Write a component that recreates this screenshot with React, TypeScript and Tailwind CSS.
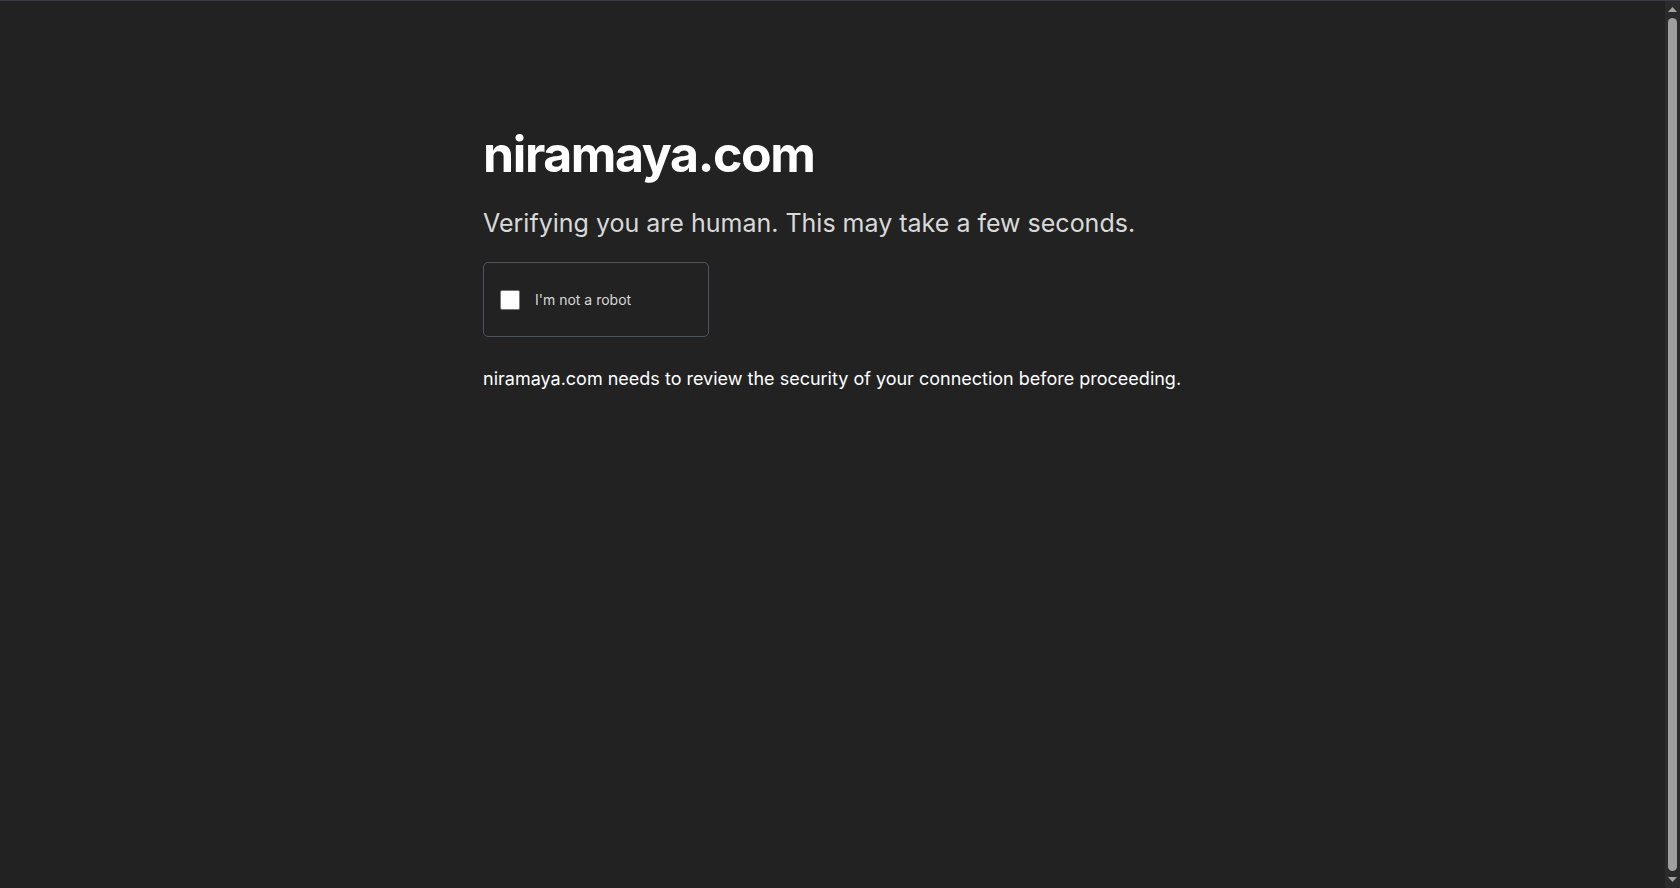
import React from "react";

export default function App() {
  return (
    <div
      className="h-[888px] w-full bg-[#222222] flex overflow-hidden border-t border-[#3b3b42]"
      style={{ fontFamily: "Inter, 'Noto Sans', sans-serif" }}
    >
      <main className="flex-1 min-w-0">
        <div className="mx-auto w-[699px] pt-[123px]">
          <h1 className="text-[50px] leading-[60px] font-bold text-white whitespace-nowrap tracking-[-0.028em]">
            niramaya.com
          </h1>
          <p className="mt-[21px] text-[25px] leading-[36px] text-[#d9d9d9] whitespace-nowrap">
            Verifying you are human. This may take a few seconds.
          </p>
          <div className="mt-[21px] w-[226px] h-[75px] border border-[#4f555e] rounded-[5px] flex items-center pl-[16px]">
            <div className="w-[20px] h-[20px] bg-white border border-[#777777] rounded-[2px]" />
            <span className="ml-[15px] text-[14px] text-[#d9d9d9] whitespace-nowrap">
              I'm not a robot
            </span>
          </div>
          <p className="mt-[30px] text-[18px] leading-[24px] text-white whitespace-nowrap">
            niramaya.com needs to review the security of your connection before proceeding.
          </p>
        </div>
      </main>
      <div className="w-[15px] h-full bg-[#2b2b2b] flex flex-col items-center shrink-0">
        <div className="h-[17px] flex items-center justify-center">
          <svg width="9" height="6" viewBox="0 0 9 6">
            <path d="M4.5 0 L9 5 L0 5 Z" fill="#a3a3a3" />
          </svg>
        </div>
        <div className="flex-1 w-[9px] rounded-full bg-[#9f9f9f]" />
        <div className="h-[17px] flex items-center justify-center">
          <svg width="9" height="6" viewBox="0 0 9 6">
            <path d="M0 0 L9 0 L4.5 5 Z" fill="#a3a3a3" />
          </svg>
        </div>
      </div>
    </div>
  );
}
